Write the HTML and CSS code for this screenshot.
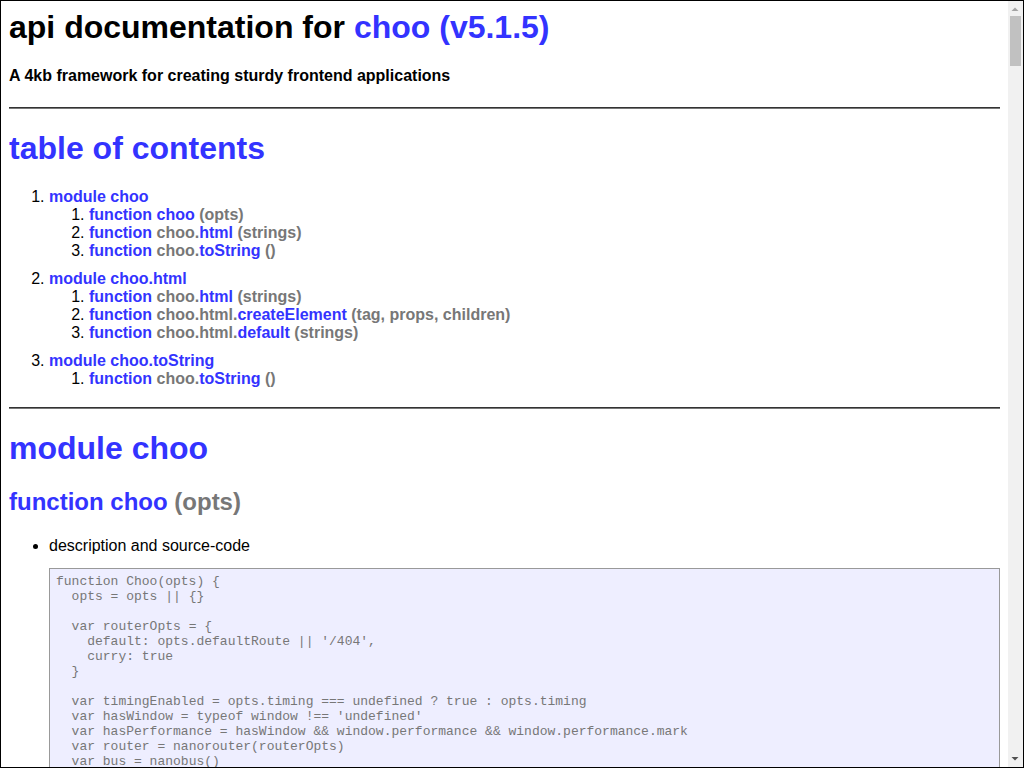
FILE: index.html
```html
<!DOCTYPE html>
<html lang="en">
<head>
<meta charset="utf-8">
<title>api documentation for choo (v5.1.5)</title>
<link rel="stylesheet" href="styles.css">
</head>
<body>
<main class="page">
<h1 class="title">api documentation for <a class="blue" href="#">choo (v5.1.5)</a></h1>
<h4 class="subtitle">A 4kb framework for creating sturdy frontend applications</h4>
<hr>
<h1 class="blue toc-title">table of contents</h1>
<ol class="toc">
  <li><a class="blue bold" href="#">module choo</a>
    <ol>
      <li><a class="bold" href="#"><span class="blue">function choo</span> <span class="gray">(opts)</span></a></li>
      <li><a class="bold" href="#"><span class="blue">function</span> <span class="gray">choo.</span><span class="blue">html</span> <span class="gray">(strings)</span></a></li>
      <li><a class="bold" href="#"><span class="blue">function</span> <span class="gray">choo.</span><span class="blue">toString</span> <span class="gray">()</span></a></li>
    </ol>
  </li>
  <li><a class="blue bold" href="#">module choo.html</a>
    <ol>
      <li><a class="bold" href="#"><span class="blue">function</span> <span class="gray">choo.</span><span class="blue">html</span> <span class="gray">(strings)</span></a></li>
      <li><a class="bold" href="#"><span class="blue">function</span> <span class="gray">choo.html.</span><span class="blue">createElement</span> <span class="gray">(tag, props, children)</span></a></li>
      <li><a class="bold" href="#"><span class="blue">function</span> <span class="gray">choo.html.</span><span class="blue">default</span> <span class="gray">(strings)</span></a></li>
    </ol>
  </li>
  <li><a class="blue bold" href="#">module choo.toString</a>
    <ol>
      <li><a class="bold" href="#"><span class="blue">function</span> <span class="gray">choo.</span><span class="blue">toString</span> <span class="gray">()</span></a></li>
    </ol>
  </li>
</ol>
<hr>
<h1 class="blue">module choo</h1>
<h2><span class="blue">function choo</span> <span class="gray">(opts)</span></h2>
<ul class="desc">
  <li>description and source-code
<pre class="code">function Choo(opts) {
  opts = opts || {}

  var routerOpts = {
    default: opts.defaultRoute || '/404',
    curry: true
  }

  var timingEnabled = opts.timing === undefined ? true : opts.timing
  var hasWindow = typeof window !== 'undefined'
  var hasPerformance = hasWindow &amp;&amp; window.performance &amp;&amp; window.performance.mark
  var router = nanorouter(routerOpts)
  var bus = nanobus()
  var rerender = null
  var tree = null
  var state = {}

  return {
    toString: toString,
    use: register,
    mount: mount,
    router: router,
    route: route,
    start: start
  }

  function route (route, handler) {
    router.on(route, function (params) {
      return function () {
        state.params = params
        return handler(state, emit)
      }
    })
  }

  function register (cb) {
    cb(state, bus)
  }

  function start () {
    tree = router(createLocation())
    rerender = nanoraf(function () {
      if (hasPerformance &amp;&amp; timingEnabled) {
        window.performance.mark('choo:renderStart')
      }
      var newTree = router(createLocation())
      tree = nanomorph(tree, newTree)
      if (hasPerformance &amp;&amp; timingEnabled) {
        window.performance.mark('choo:renderEnd')
        window.performance.measure('choo:render', 'choo:renderStart', 'choo:renderEnd')
      }
    })

    bus.prependListener('render', rerender)

    documentReady(function () {
      bus.emit('DOMContentLoaded')
    })

    return tree
  }

  function emit (eventName, data) {
    bus.emit(eventName, data)
  }

  function mount (selector) {
    var newTree = start()
    documentReady(function () {
      var root = document.querySelector(selector)
      nanomount(root, newTree)
      tree = root
    })
  }

  function toString (location, _state) {
    state = _state || {}
    var html = router(location)
    return html.toString()
  }
}</pre>
  </li>
</ul>
<h2><span class="blue">function</span> <span class="gray">choo.</span><span class="blue">html</span> <span class="gray">(strings)</span></h2>
<ul class="desc">
  <li>description and source-code
<pre class="code">function (strings) {
  var state = TEXT, reg = ''
  var arglen = arguments.length
  var parts = []

  for (var i = 0; i &lt; strings.length; i++) {
    if (i &lt; arglen - 1) {
      var arg = arguments[i+1]
      var p = parse(strings[i])
      var xstate = state
      if (xstate === ATTR_VALUE_DQ) xstate = ATTR_VALUE
      if (xstate === ATTR_VALUE_SQ) xstate = ATTR_VALUE
      if (xstate === ATTR_VALUE_W) xstate = ATTR_VALUE
      if (xstate === ATTR) xstate = ATTR_KEY
      p.push([ VAR, xstate, arg ])
      parts.push.apply(parts, p)
    } else parts.push.apply(parts, parse(strings[i]))
  }
  ...
  return tree[2][0]
}</pre>
  </li>
</ul>
<h2><span class="blue">function</span> <span class="gray">choo.</span><span class="blue">toString</span> <span class="gray">()</span></h2>
<ul class="desc">
  <li>description and source-code
<pre class="code">toString = function () {
    [native code]
}</pre>
  </li>
</ul>
<hr>
<h1 class="blue">module choo.html</h1>
<h2><span class="blue">function</span> <span class="gray">choo.</span><span class="blue">html</span> <span class="gray">(strings)</span></h2>
<h2><span class="blue">function</span> <span class="gray">choo.html.</span><span class="blue">createElement</span> <span class="gray">(tag, props, children)</span></h2>
<h2><span class="blue">function</span> <span class="gray">choo.html.</span><span class="blue">default</span> <span class="gray">(strings)</span></h2>
<hr>
<h1 class="blue">module choo.toString</h1>
<h2><span class="blue">function</span> <span class="gray">choo.</span><span class="blue">toString</span> <span class="gray">()</span></h2>
<hr>
<div class="footer">[ this document was created with utility2 ]</div>
</main>
<div class="scrollbar" aria-hidden="true">
  <div class="sb-btn">
    <svg width="15" height="15" viewBox="0 0 15 15"><polygon points="3.5,10 10.5,10 7,6.5" fill="#a3a3a3"/></svg>
  </div>
  <div class="sb-track"><div class="sb-thumb"></div></div>
  <div class="sb-btn">
    <svg width="15" height="15" viewBox="0 0 15 15"><polygon points="3.5,5 10.5,5 7,8.5" fill="#505050"/></svg>
  </div>
</div>
</body>
</html>
```

FILE: styles.css
```css
html {
  height: 100%;
  box-sizing: border-box;
  border: 1px solid #000;
  overflow: hidden;
}

body {
  height: 100%;
  margin: 0;
  display: flex;
  font-family: "Liberation Sans", Arial, sans-serif;
  font-size: 16px;
  color: #000;
  background: #fff;
}

.page {
  flex: 1;
  min-width: 0;
  padding: 8px;
  overflow: hidden;
  scrollbar-width: none;
}

.scrollbar {
  width: 15px;
  flex: none;
  display: flex;
  flex-direction: column;
  background: #f1f1f1;
}

.sb-btn {
  height: 15px;
  flex: none;
}

.sb-btn svg {
  display: block;
}

.sb-track {
  flex: 1;
  padding: 0 2px;
}

.sb-thumb {
  height: 50px;
  background: #c1c1c1;
}

a {
  text-decoration: none;
}

.blue {
  color: #33f;
}

.gray {
  color: #777;
}

.bold {
  font-weight: bold;
}

h1 {
  font-size: 32px;
  margin: 21.44px 0;
}

h1.title {
  margin-top: 0;
}

h1.toc-title {
  margin-bottom: 20.44px;
}

h2 {
  font-size: 24px;
  margin: 19.92px 0 20.92px;
}

.subtitle {
  font-size: 16px;
  margin: 21.28px 0;
}

hr {
  margin: 8px 0;
  border: 0;
  height: 0;
  border-top: 1px solid #333;
  border-bottom: 1px solid #777;
}

.toc {
  margin: 15px 0 19px;
  padding-left: 40px;
}

.toc > li {
  margin-bottom: 10px;
}

.toc ol {
  margin: 0;
  padding-left: 40px;
}

.desc {
  margin: 16px 0;
  padding-left: 40px;
}

.code {
  margin: 13px 0 16px;
  padding: 5px 6px 4px;
  border: 1px solid #999;
  background: #eef;
  color: #777;
  font-family: "Liberation Mono", "Courier New", monospace;
  font-size: 13px;
  line-height: 15px;
  white-space: pre-wrap;
  word-wrap: break-word;
}

.footer {
  text-align: center;
  color: #777;
  margin: 16px 0;
}
```
